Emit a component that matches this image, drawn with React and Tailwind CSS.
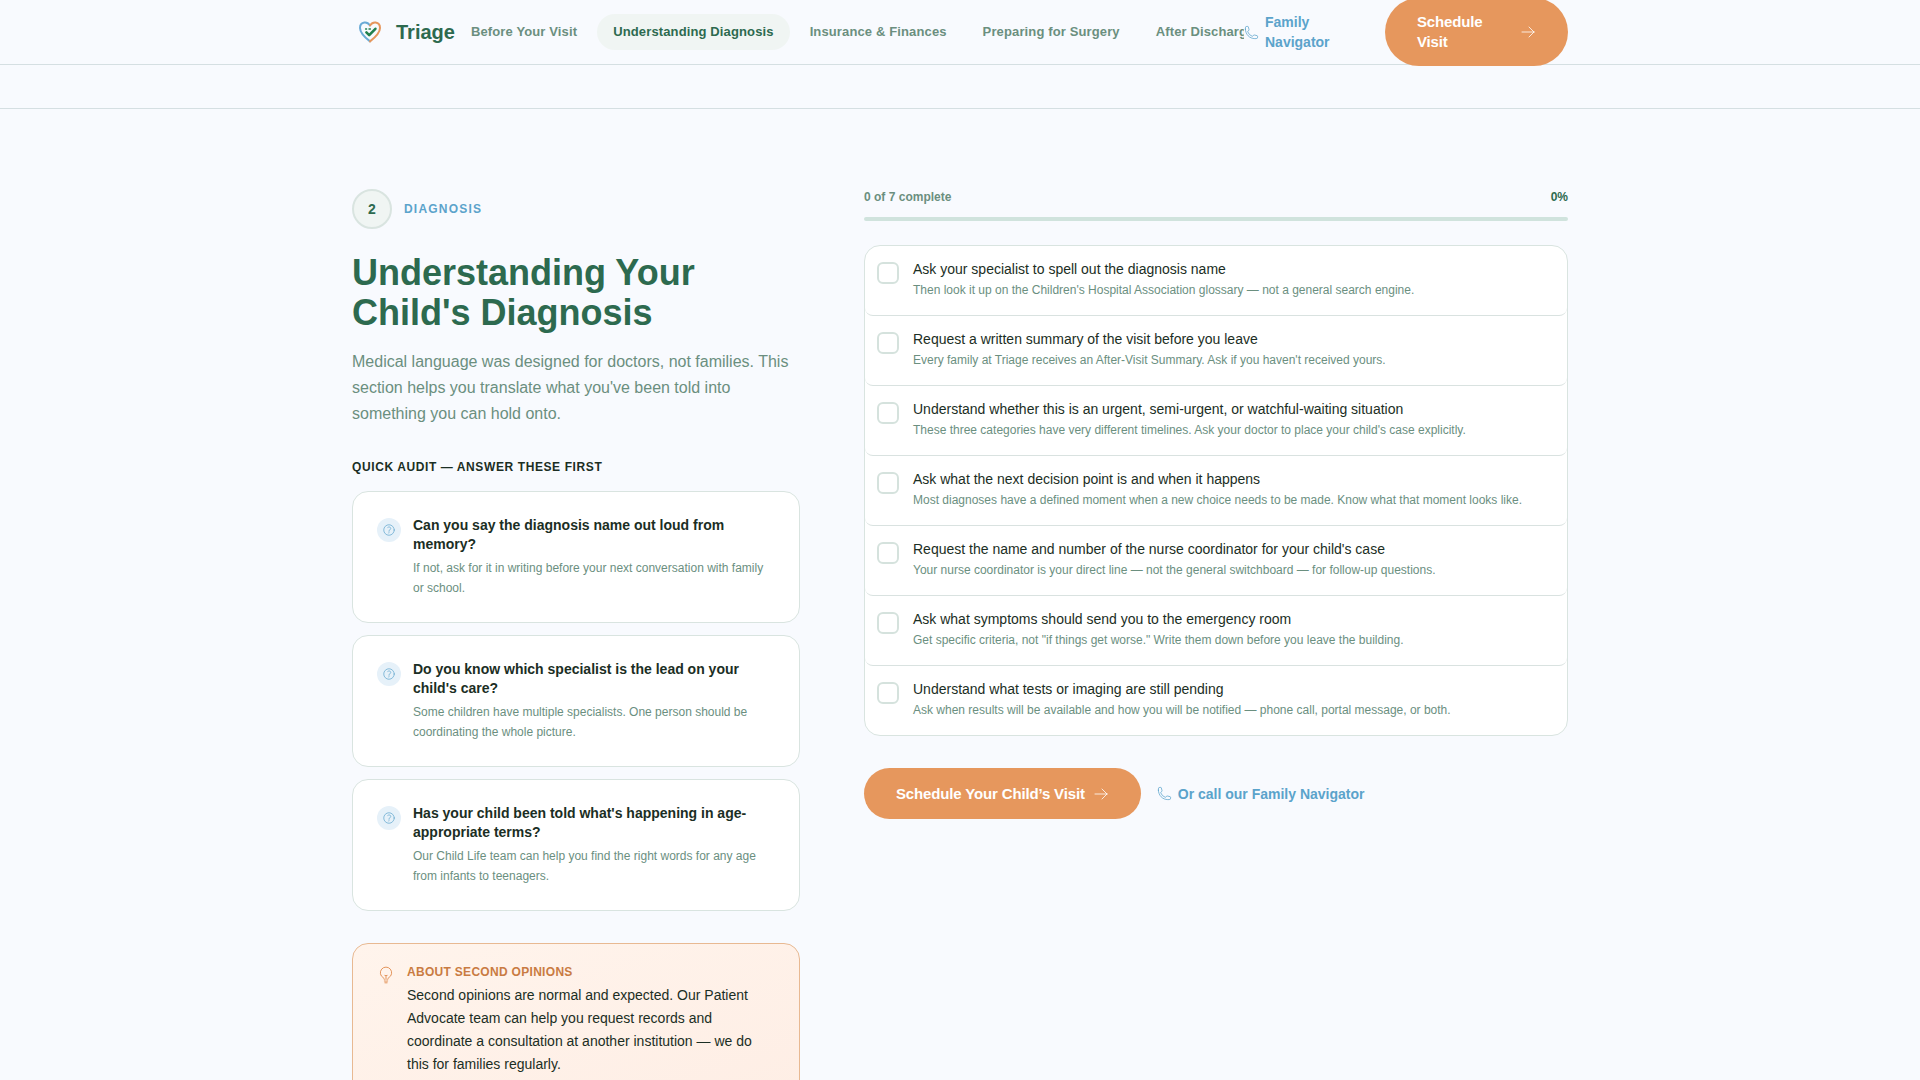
import React, { useState } from "react";
import {
  HiOutlineArrowRight,
  HiOutlineLightBulb,
  HiOutlinePhone,
  HiOutlineQuestionMarkCircle,
} from "react-icons/hi2";

const navLinks = [
  { label: "Before Your Visit", href: "#before" },
  { label: "Understanding Diagnosis", href: "#diagnosis", active: true },
  { label: "Insurance & Finances", href: "#insurance" },
  { label: "Preparing for Surgery", href: "#surgery" },
  { label: "After Discharge", href: "#discharge" },
];

const auditQuestions = [
  {
    title: "Can you say the diagnosis name out loud from memory?",
    text: "If not, ask for it in writing before your next conversation with family or school.",
  },
  {
    title: "Do you know which specialist is the lead on your child's care?",
    text: "Some children have multiple specialists. One person should be coordinating the whole picture.",
  },
  {
    title: "Has your child been told what's happening in age-appropriate terms?",
    text: "Our Child Life team can help you find the right words for any age from infants to teenagers.",
  },
];

const checklist = [
  {
    id: "name",
    title: "Ask your specialist to spell out the diagnosis name",
    text: "Then look it up on the Children's Hospital Association glossary — not a general search engine.",
  },
  {
    id: "summary",
    title: "Request a written summary of the visit before you leave",
    text: "Every family at Triage receives an After-Visit Summary. Ask if you haven't received yours.",
  },
  {
    id: "urgency",
    title: "Understand whether this is an urgent, semi-urgent, or watchful-waiting situation",
    text: "These three categories have very different timelines. Ask your doctor to place your child's case explicitly.",
  },
  {
    id: "decision",
    title: "Ask what the next decision point is and when it happens",
    text: "Most diagnoses have a defined moment when a new choice needs to be made. Know what that moment looks like.",
  },
  {
    id: "nurse",
    title: "Request the name and number of the nurse coordinator for your child's case",
    text: "Your nurse coordinator is your direct line — not the general switchboard — for follow-up questions.",
  },
  {
    id: "symptoms",
    title: "Ask what symptoms should send you to the emergency room",
    text: "Get specific criteria, not \"if things get worse.\" Write them down before you leave the building.",
  },
  {
    id: "pending",
    title: "Understand what tests or imaging are still pending",
    text: "Ask when results will be available and how you will be notified — phone call, portal message, or both.",
  },
];

const Logo = () => (
  <svg width="36" height="36" viewBox="0 0 36 36" fill="none" strokeLinecap="round" strokeLinejoin="round">
    <path
      d="M18 11.5C16.5 9.3 14.6 8.3 12.4 8.6C9.8 9 8 11.1 8 13.9C8 19.1 13 23.4 18 27.4"
      stroke="#6aaad6"
      strokeWidth="2"
    />
    <path
      d="M18 11.5C19.5 9.3 21.4 8.3 23.6 8.6C26.2 9 28 11.1 28 13.9C28 19.1 23 23.4 18 27.4"
      stroke="#e6975d"
      strokeWidth="2"
    />
    <path d="M14.4 18.4L17.2 21.2L23.4 14.8" stroke="#22804e" strokeWidth="2.6" />
    <path d="M13.6 15H14.6M17 15H18.4" stroke="#22804e" strokeWidth="1.4" />
  </svg>
);

const Header = () => (
  <header className="sticky top-0 z-10 bg-[#f8fafe] border-b border-[#d5dfe2]">
    <div className="flex items-center h-16 max-w-7xl mx-auto px-8">
      <a href="#top" className="flex items-center gap-2 shrink-0 text-xl font-bold text-[#2d6a4f]">
        <Logo />
        Triage
      </a>
      <nav className="flex flex-1 min-w-0 gap-1 overflow-hidden">
        {navLinks.map((link) => (
          <a
            key={link.label}
            href={link.href}
            className={
              link.active
                ? "shrink-0 px-4 py-2 rounded-full text-[13px] leading-5 font-bold tracking-[0.01em] whitespace-nowrap bg-[#f0f5f3] text-[#2d6a4f]"
                : "shrink-0 px-4 py-2 rounded-full text-[13px] leading-5 font-bold tracking-[0.01em] whitespace-nowrap text-[#6b8f7f]"
            }
          >
            {link.label}
          </a>
        ))}
      </nav>
      <div className="flex items-center justify-between shrink-0 w-[324px]">
        <a href="#navigator" className="flex items-center gap-1.5 text-sm leading-5 font-bold text-[#5ba3cb]">
          <HiOutlinePhone size={15} strokeWidth={1.2} className="shrink-0" />
          <span className="w-min">Family Navigator</span>
        </a>
        <button
          type="button"
          className="flex items-center justify-between w-[183px] px-8 py-3.5 rounded-full bg-[#e6975d] text-left text-[15px] leading-5 font-bold tracking-[-0.01em] text-white"
        >
          <span className="w-min">Schedule Visit</span>
          <HiOutlineArrowRight size={16} strokeWidth={1.2} className="shrink-0" />
        </button>
      </div>
    </div>
  </header>
);

const AuditCard = ({ title, text }) => (
  <li className="flex items-start gap-3 p-6 bg-white border border-[#d9e4e0] rounded-2xl">
    <span className="flex items-center justify-center shrink-0 size-6 mt-0.5 rounded-full bg-[#e6f1f9] text-[#5ba3cb]">
      <HiOutlineQuestionMarkCircle size={14} strokeWidth={1.2} />
    </span>
    <div>
      <h3 className="text-sm leading-[19px] font-bold text-[#1b2e24]">{title}</h3>
      <p className="mt-1 text-xs leading-5 text-[#6b8f7f]">{text}</p>
    </div>
  </li>
);

const ChecklistRow = ({ item, checked, onToggle }) => (
  <li className="flex items-start gap-3.5 px-3 pt-3.5 pb-[15px] rounded-lg border-b border-[#d9e2e0] last:border-b-0">
    <input
      id={item.id}
      type="checkbox"
      checked={checked}
      onChange={onToggle}
      className="appearance-none shrink-0 size-[22px] mt-0.5 rounded-md border-2 border-[#d5e2dd] bg-white checked:bg-[#2d6a4f] checked:border-[#2d6a4f]"
    />
    <label htmlFor={item.id} className="flex-1">
      <span className="block text-sm leading-[18px] text-[#1b2e24]">{item.title}</span>
      <span className="block mt-0.5 text-xs leading-5 text-[#6b8f7f]">{item.text}</span>
    </label>
  </li>
);

const App = () => {
  const [done, setDone] = useState([]);

  const toggle = (id) => {
    setDone((prev) => (prev.includes(id) ? prev.filter((d) => d !== id) : [...prev, id]));
  };

  const percent = Math.round((done.length / checklist.length) * 100);

  return (
    <div className="min-h-screen bg-[#f8fafe] font-['Liberation_Sans',sans-serif]">
      <Header />
      <div className="h-11 border-b border-[#d5dfe2]" />

      <main className="grid grid-cols-[448fr_704fr] items-start gap-16 max-w-7xl mx-auto px-8 py-20">
        <section>
          <div className="flex items-center gap-3">
            <span className="flex items-center justify-center size-10 rounded-full border-2 border-[#d9e4e0] bg-[#f0f5f3] text-sm font-bold text-[#2d6a4f]">
              2
            </span>
            <span className="text-xs font-bold tracking-widest uppercase text-[#5ba3cb]">Diagnosis</span>
          </div>
          <h1 className="mt-6 text-4xl font-bold leading-10 text-[#2d6a4f]">
            Understanding Your Child's Diagnosis
          </h1>
          <p className="mt-4 text-base leading-[26px] text-[#6b8f7f]">
            Medical language was designed for doctors, not families. This section helps you translate what
            you've been told into something you can hold onto.
          </p>

          <h2 className="mt-8 text-xs font-bold tracking-wider uppercase text-[#1b2e24]">
            Quick audit — answer these first
          </h2>
          <ul className="flex flex-col gap-3 mt-4">
            {auditQuestions.map((question) => (
              <AuditCard key={question.title} {...question} />
            ))}
          </ul>

          <aside className="flex items-start gap-3 mt-8 px-6 py-5 rounded-2xl border border-[#e8b992] bg-linear-to-br from-[#fff4ec] to-[#feeee5]">
            <HiOutlineLightBulb size={18} strokeWidth={1.2} className="shrink-0 mt-0.5 text-[#e08a4c]" />
            <div>
              <h3 className="text-xs font-bold tracking-wide uppercase text-[#c97b42]">About second opinions</h3>
              <p className="mt-1 text-sm leading-[23px] text-[#1b2e24]">
                Second opinions are normal and expected. Our Patient Advocate team can help you request
                records and coordinate a consultation at another institution — we do this for families
                regularly.
              </p>
            </div>
          </aside>
        </section>

        <section>
          <div className="flex items-center justify-between text-xs font-bold">
            <span className="text-[#6b8f7f]">
              {done.length} of {checklist.length} complete
            </span>
            <span className="text-[#2d6a4f]">{percent}%</span>
          </div>
          <div className="h-1 mt-3 rounded-full overflow-hidden bg-[#d0e3dd]">
            <div className="h-full bg-[#2d6a4f]" style={{ width: `${percent}%` }} />
          </div>

          <ul className="mt-6 bg-white border border-[#d9e4e0] rounded-2xl">
            {checklist.map((item) => (
              <ChecklistRow
                key={item.id}
                item={item}
                checked={done.includes(item.id)}
                onToggle={() => toggle(item.id)}
              />
            ))}
          </ul>

          <div className="flex items-center gap-4 mt-8">
            <button
              type="button"
              className="flex items-center gap-2 px-8 py-4 rounded-full bg-[#e6975d] text-[15px] leading-[19px] font-bold tracking-[-0.01em] text-white"
            >
              Schedule Your Child’s Visit
              <HiOutlineArrowRight size={16} strokeWidth={1.2} />
            </button>
            <a href="#navigator" className="flex items-center gap-1.5 text-sm font-bold text-[#5ba3cb]">
              <HiOutlinePhone size={15} strokeWidth={1.2} />
              Or call our Family Navigator
            </a>
          </div>
        </section>
      </main>
    </div>
  );
};

export default App;
